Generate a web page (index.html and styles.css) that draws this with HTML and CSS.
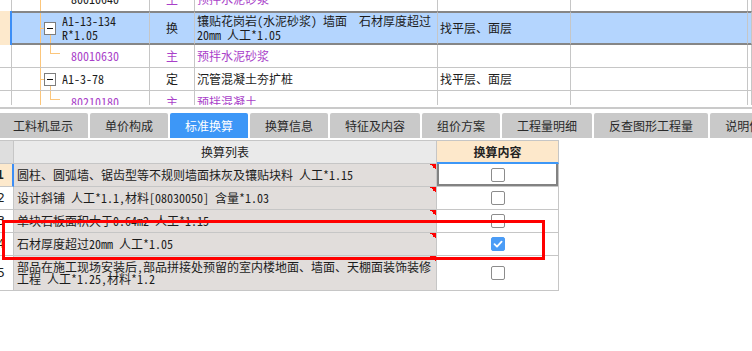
FILE: index.html
```html
<!DOCTYPE html>
<html lang="zh">
<head>
<meta charset="utf-8">
<title>标准换算</title>
<link rel="stylesheet" href="styles.css">
</head>
<body>
<div class="top">
  <div class="trow r0">
    <div class="c ind"></div>
    <div class="c code tree ccode"><span>80010640</span></div>
    <div class="c type purple"><span>主</span></div>
    <div class="c name purple"><span>预拌水泥砂浆</span></div>
    <div class="c spec"></div>
    <div class="c"></div>
    <div class="c"></div>
  </div>
  <div class="trow sel">
    <div class="c ind"></div>
    <div class="c code parent pcode"><i class="minus"></i><span>A1-13-134<br>R*1.05</span></div>
    <div class="c type">换</div>
    <div class="c name"><span>镶贴花岗岩(水泥砂浆) 墙面&nbsp;&nbsp;石材厚度超过<br>20mm 人工*1.05</span></div>
    <div class="c spec">找平层、面层</div>
    <div class="c"></div>
    <div class="c"></div>
  </div>
  <div class="trow">
    <div class="c ind"></div>
    <div class="c code child ccode purple">80010630</div>
    <div class="c type purple">主</div>
    <div class="c name purple">预拌水泥砂浆</div>
    <div class="c spec"></div>
    <div class="c"></div>
    <div class="c"></div>
  </div>
  <div class="trow">
    <div class="c ind"></div>
    <div class="c code parent pcode"><i class="minus"></i><span>A1-3-78</span></div>
    <div class="c type">定</div>
    <div class="c name">沉管混凝土夯扩桩</div>
    <div class="c spec">找平层、面层</div>
    <div class="c"></div>
    <div class="c"></div>
  </div>
  <div class="trow">
    <div class="c ind"></div>
    <div class="c code child ccode purple">80210180</div>
    <div class="c type purple">主</div>
    <div class="c name purple">预拌混凝土</div>
    <div class="c spec"></div>
    <div class="c"></div>
    <div class="c"></div>
  </div>
</div>
<div class="sep"></div>
<div class="tabs">
  <div class="tab first">工料机显示</div>
  <div class="tab">单价构成</div>
  <div class="tab on">标准换算</div>
  <div class="tab">换算信息</div>
  <div class="tab">特征及内容</div>
  <div class="tab">组价方案</div>
  <div class="tab">工程量明细</div>
  <div class="tab">反查图形工程量</div>
  <div class="tab">说明信息</div>
</div>
<div class="bwrap">
  <div class="brow bhead">
    <div class="b num"></div>
    <div class="b lhead">换算列表</div>
    <div class="b chead">换算内容</div>
  </div>
  <div class="brow cur">
    <div class="b num">1</div>
    <div class="b txt">圆柱、圆弧墙、锯齿型等不规则墙面抹灰及镶贴块料 人工*1.15</div>
    <div class="b chk"><span class="cb"></span></div>
  </div>
  <div class="brow">
    <div class="b num">2</div>
    <div class="b txt">设计斜铺 人工*1.1,材料[08030050] 含量*1.03</div>
    <div class="b chk"><span class="cb"></span></div>
  </div>
  <div class="brow">
    <div class="b num">3</div>
    <div class="b txt">单块石板面积大于0.64m2 人工*1.15</div>
    <div class="b chk"><span class="cb"></span></div>
  </div>
  <div class="brow">
    <div class="b num">4</div>
    <div class="b txt">石材厚度超过20mm 人工*1.05</div>
    <div class="b chk"><span class="cb on"><svg viewBox="0 0 14 14" width="14" height="14"><polyline points="3.5,7.2 6,9.6 10.6,4.6" fill="none" stroke="#fff" stroke-width="1.8" stroke-linecap="round" stroke-linejoin="round"/></svg></span></div>
  </div>
  <div class="brow tall">
    <div class="b num">5</div>
    <div class="b txt two">部品在施工现场安装后,部品拼接处预留的室内楼地面、墙面、天棚面装饰装修<br>工程 人工*1.25,材料*1.2</div>
    <div class="b chk"><span class="cb"></span></div>
  </div>
  <div class="mark"></div>
</div>
</body>
</html>
```
FILE: styles.css
```css
* { box-sizing: border-box; margin: 0; padding: 0; }
body {
  width: 752px;
  height: 351px;
  overflow: hidden;
  background: #fff;
  font-family: "Noto Sans Mono CJK SC", "Noto Sans CJK SC", monospace;
  font-size: 12px;
  color: #1c1c1c;
}

/* ---------- top grid ---------- */
.top { height: 105px; overflow: hidden; }
.trow {
  display: grid;
  grid-template-columns: 12px 138px 45px 243px 133px 177px 1fr;
  height: 23px;
}
.trow .c {
  border-right: 1px solid #c6c6c6;
  border-bottom: 1px solid #c6c6c6;
  display: flex;
  align-items: center;
  white-space: nowrap;
  overflow: hidden;
  line-height: 14px;
}
.r0 { height: 11px; }
.r0 .c { border-bottom: 0; align-items: flex-start; }
.r0 .c span { margin-top: -8px; }

.sel { height: 34px; }
.sel .c {
  background-color: #b4d5fe;
  border-top: 2px solid #868686;
  border-bottom: 2px solid #868686;
}
.sel .c.ind {
  background-color: #fde9cc;
  border-top: 0;
  border-bottom: 0;
  border-right: 2px solid #3c8ef6;
}
.purple { color: #a93fc9; }
.type { justify-content: center; }
.name, .spec { padding-left: 2px; }
.pcode { padding-left: 32px; }
.ccode { padding-left: 59px; }

.tree, .parent, .child { background-repeat: no-repeat; }
.tree {
  background-image: linear-gradient(#fcc67b, #fcc67b);
  background-position: 28px 0;
  background-size: 1px 100%;
}
.parent {
  background-image: linear-gradient(#fcc67b, #fcc67b), linear-gradient(#fcc67b, #fcc67b), linear-gradient(#fcc67b, #fcc67b);
  background-position: 28px 0, 28px 50%, 38px 100%;
  background-size: 1px 100%, 4px 1px, 1px calc(50% - 6px);
}
.child {
  background-image: linear-gradient(#fcc67b, #fcc67b), linear-gradient(#fcc67b, #fcc67b), linear-gradient(#fcc67b, #fcc67b);
  background-position: 28px 0, 38px 0, 38px 8px;
  background-size: 1px 100%, 1px 9px, 10px 1px;
}
.minus {
  flex: none;
  width: 12px;
  height: 13px;
  margin-right: 6px;
  border: 1px solid #7d7d7d;
  background: #fff;
  display: flex;
  align-items: center;
  justify-content: center;
}
.minus::before {
  content: "";
  width: 6px;
  height: 1px;
  background: #111;
}

/* ---------- tabs ---------- */
.sep { margin-top: 2px; height: 2px; background: #cacaca; }
.tabs {
  display: flex;
  gap: 2px;
  padding-top: 4px;
  height: 29px;
  overflow: hidden;
  white-space: nowrap;
}
.tab {
  flex: none;
  padding: 0 15px;
  background: #c9c9c9;
  border-radius: 2px 2px 0 0;
  font-family: "Noto Sans CJK SC", sans-serif;
  font-size: 12px;
  line-height: 25px;
  color: #2a2a2a;
}
.tab.first { margin-left: -2px; }
.tab.on { background: #3d97f7; color: #fff; }

/* ---------- bottom grid ---------- */
.bwrap { position: relative; margin-top: 2px; }
.brow {
  display: grid;
  grid-template-columns: 14px 423px 122px;
  height: 23px;
}
.brow.tall { height: 35px; }
.b {
  border-right: 1px solid #c6c6c6;
  border-bottom: 1px solid #c6c6c6;
  display: flex;
  align-items: center;
  white-space: nowrap;
  overflow: hidden;
  line-height: 14px;
}
.bhead { height: 24px; }
.bhead .b {
  border-top: 1px solid #c6c6c6;
  font-family: "Noto Sans CJK SC", sans-serif;
  justify-content: center;
}
.bhead .num { background: #dedede; }
.lhead { background: #eaeaea; color: #222; }
.chead {
  background: #fde8cb;
  font-weight: bold;
  color: #222;
  border-bottom: 2px solid #3d97f7 !important;
}
.num {
  justify-content: flex-end;
  padding-right: 8px;
  font-family: "DejaVu Sans", sans-serif;
  font-size: 12px;
  color: #222;
}
.cur .num {
  background: #fde9cc;
  border-right: 2px solid #3c8ef6;
  font-weight: bold;
}
.txt {
  padding-left: 3px;
  background-color: #e1dddb;
  background-image: linear-gradient(225deg, #f00 50%, transparent 50%);
  background-size: 6px 6px;
  background-position: right top;
  background-repeat: no-repeat;
}
.txt.two { line-height: 12px; }
.chk { justify-content: center; background: #fff; }
.cur .chk {
  box-shadow: inset 2px 0 #828282, inset -2px 0 #828282, inset 0 -2px #828282;
}
.cb {
  width: 14px;
  height: 14px;
  border: 1px solid #8c8c8c;
  border-radius: 2px;
  background: #fff;
  display: flex;
  align-items: center;
  justify-content: center;
}
.cb.on { background: #4b9cf6; border-color: #4b9cf6; }
.cb svg { display: block; flex: none; }

.mark {
  position: absolute;
  left: 2px;
  top: 80px;
  width: 543px;
  height: 40px;
  border: 3px solid #f00;
}
```
